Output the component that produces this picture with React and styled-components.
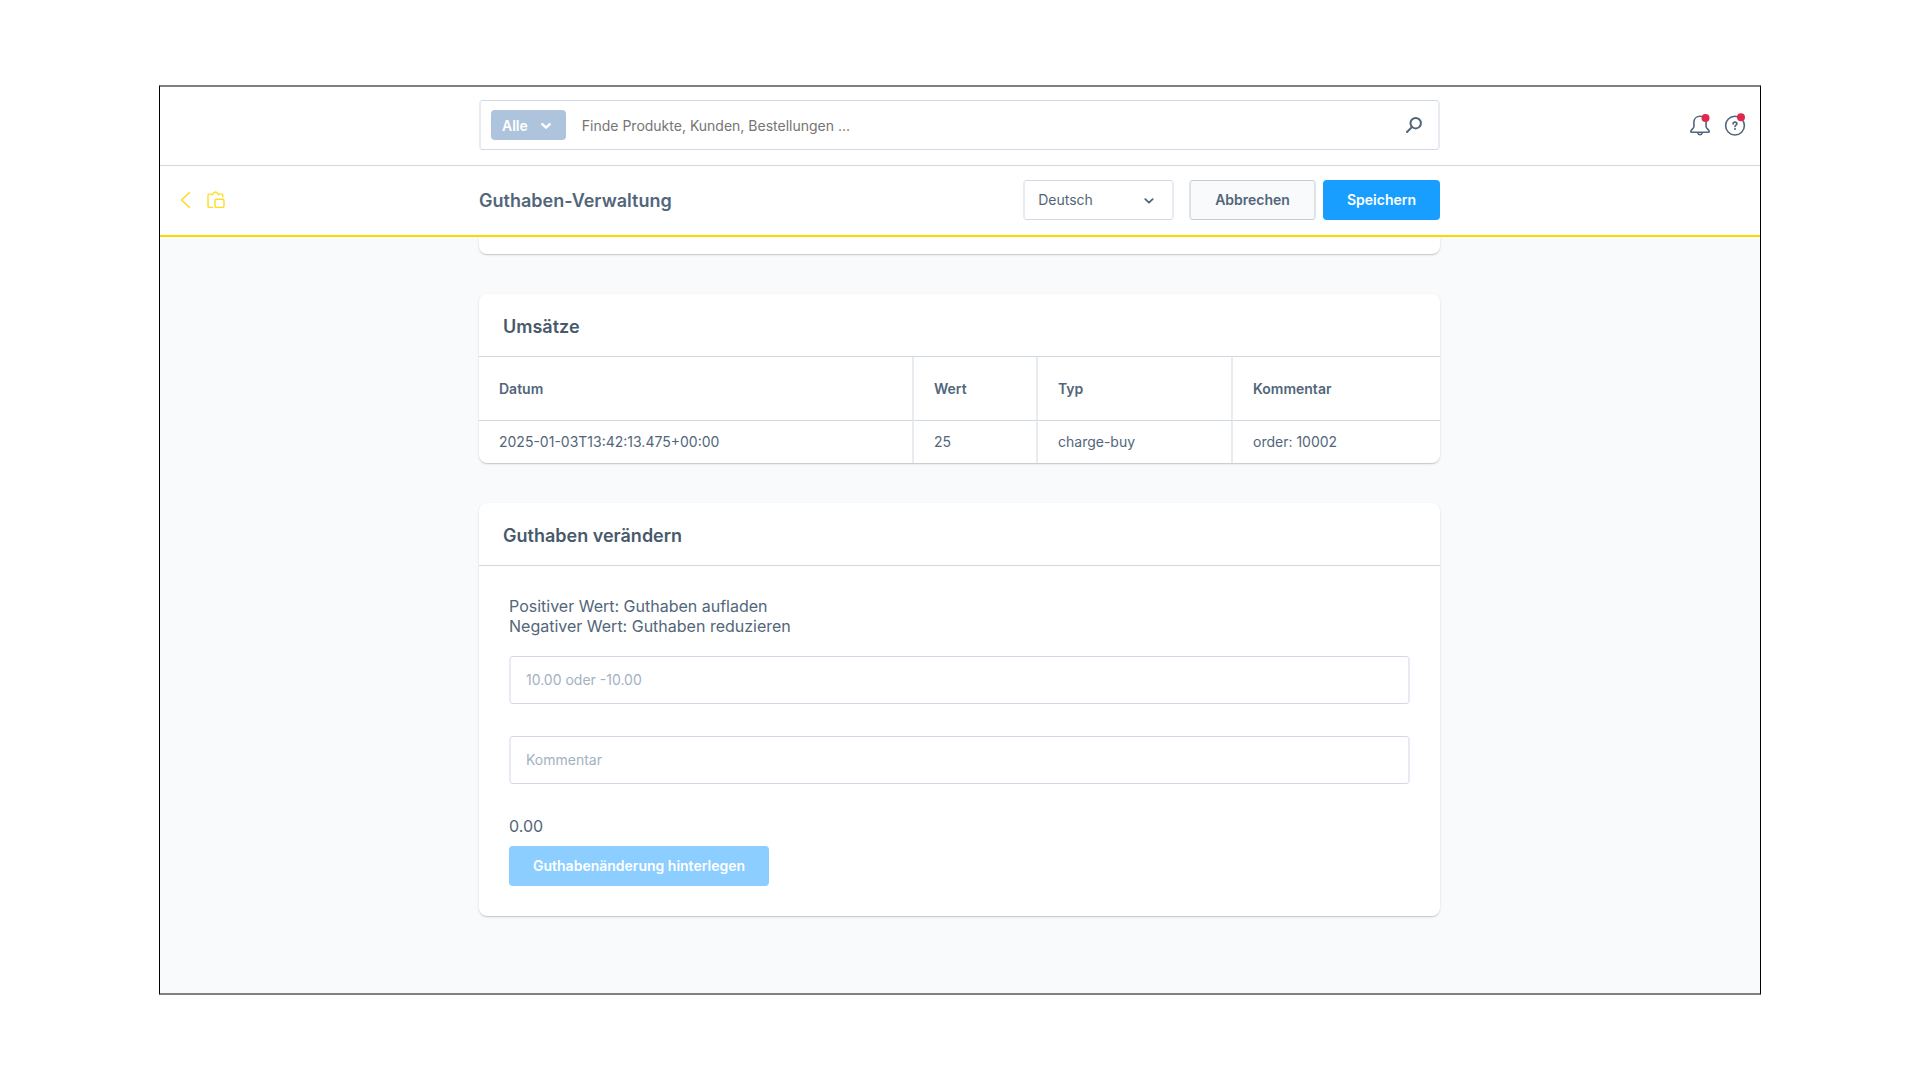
import React from "react";
import styled, { createGlobalStyle } from "styled-components";

const GlobalStyle = createGlobalStyle`
  * {
    box-sizing: border-box;
  }

  body {
    margin: 0;
    background: #fff;
    color: #52667a;
    font-family: Inter, "Liberation Sans", sans-serif;
    font-size: 14px;
    line-height: 20px;
  }

  button, input, select {
    font: inherit;
  }
`;

const Frame = styled.div`
  display: flex;
  flex-direction: column;
  min-height: calc(100vh - 170px);
  margin: 85px 159px;
  border: solid #000;
  border-width: 2px 1px;
  border-top-color: #808080;
  border-bottom-color: #808080;
  background: #f9fafc;
`;

const Bar = styled.header`
  display: grid;
  grid-template-columns: 1fr minmax(0, 961px) 1fr;
  padding-right: 1px;
  background: #fff;
`;

const SearchHeader = styled(Bar)`
  padding-top: 13px;
  padding-bottom: 15px;
  border-bottom: 1px solid #d1d9e0;
`;

const SmartBar = styled(Bar)`
  align-items: center;
  padding-top: 14px;
  padding-bottom: 15px;
  border-bottom: 2px solid #ffd700;
`;

const SearchBox = styled.form`
  display: flex;
  align-items: center;
  grid-column: 2;
  height: 50px;
  padding: 0 16px 0 10px;
  border: solid #d1d9e6;
  border-width: 1px 2px;
  border-left-color: #e8ecf2;
  border-right-color: #e8ecf2;
  border-radius: 4px;
`;

const TypeButton = styled.button`
  display: flex;
  align-items: center;
  gap: 13px;
  height: 30px;
  padding: 1px 15px 0 11px;
  border: 0;
  border-radius: 4px;
  background: #aec4dc;
  color: #fff;
  font-weight: 600;
`;

const SearchInput = styled.input`
  flex: 1;
  min-width: 0;
  margin-left: 16px;
  padding: 2px 0 0;
  border: 0;
  outline: 0;
  background: none;

  &::placeholder {
    color: #757575;
  }
`;

const IconButton = styled.button`
  display: flex;
  padding: 0;
  border: 0;
  background: none;
  color: #52667a;
`;

const HeaderActions = styled.div`
  display: flex;
  align-items: center;
  justify-content: flex-end;
  gap: 13px;
  padding-right: 13px;
`;

const ModuleNav = styled.nav`
  display: flex;
  align-items: center;
  gap: 14px;
  padding-left: 19px;
`;

const BackLink = styled.a`
  display: flex;
  color: #ffd91a;
`;

const SmartBarContent = styled.div`
  display: flex;
  align-items: center;
`;

const PageTitle = styled.h1`
  flex: 1;
  margin: 0;
  padding-top: 2px;
  font-size: 18px;
  font-weight: 600;
  line-height: 24px;
`;

const SelectWrap = styled.div`
  position: relative;
  width: 151px;
  margin-right: 15px;

  svg {
    position: absolute;
    top: 18px;
    right: 20px;
    pointer-events: none;
  }
`;

const Select = styled.select`
  appearance: none;
  width: 100%;
  height: 40px;
  padding: 0 40px 0 13px;
  border: solid #d1d9e6;
  border-width: 1px 2px;
  border-left-color: #e8ecf2;
  border-right-color: #e8ecf2;
  border-radius: 4px;
  background: #fff;
  color: #52667a;
`;

const Button = styled.button`
  height: 40px;
  padding: 0 24px;
  border: 0;
  border-radius: 4px;
  background: #189eff;
  color: #fff;
  font-weight: 600;

  &:disabled {
    background: #8bceff;
  }
`;

const CancelButton = styled(Button)`
  margin-right: 7px;
  border: solid #c2ccd6;
  border-width: 1px 2px;
  border-left-color: #dde3e9;
  border-right-color: #dde3e9;
  background: #f9fafc;
  color: #52667a;
`;

const Content = styled.main`
  display: grid;
  grid-template-columns: minmax(0, 961px);
  justify-content: center;
  gap: 40px;
  padding: 0 1px 77px 0;
`;

const Card = styled.section`
  border-radius: 8px;
  background: #fff;
  box-shadow: 0 1px 1px rgba(0, 0, 0, 0.08), 0 2px 1px -1px rgba(0, 0, 0, 0.06),
    0 1px 3px rgba(0, 0, 0, 0.1);
`;

// end of the card that is scrolled under the smart bar
const CardEnd = styled(Card)`
  height: 17px;
  border-radius: 0 0 8px 8px;
  clip-path: inset(0 -4px -4px -4px);
`;

const CardTitle = styled.h2`
  margin: 0;
  padding: 21px 24px 17px;
  border-bottom: 1px solid #d1d9e0;
  color: #475a6b;
  font-size: 18px;
  font-weight: 600;
  line-height: 24px;
`;

const Table = styled.table`
  width: 100%;
  border-spacing: 0;
  table-layout: fixed;
  text-align: left;

  th,
  td {
    padding: 0 19px 0 20px;
    border-right: 2px solid #e8ecf0;
  }

  th:last-child,
  td:last-child {
    border-right: 0;
  }

  th {
    height: 64px;
    border-bottom: 1px solid #d1d9e0;
    font-weight: 600;
  }

  td {
    height: 42px;
  }
`;

const Form = styled.form`
  padding: 30px;
  font-size: 16px;
`;

const Hint = styled.label`
  display: block;
  margin-bottom: 20px;
`;

const Input = styled.input`
  display: block;
  width: 100%;
  height: 48px;
  margin-bottom: 32px;
  padding: 0 15px 2px;
  border: solid #d1d9e6;
  border-width: 1px 2px;
  border-left-color: #e8ecf2;
  border-right-color: #e8ecf2;
  border-radius: 4px;
  color: #52667a;
  font-size: 14px;

  &::placeholder {
    color: #a3b1c2;
  }
`;

const Amount = styled.p`
  margin: 0 0 10px;
`;

const SubmitButton = styled(Button)`
  font-size: 14px;
`;

const Chevron = ({ width = 1.8 }) => (
  <svg
    width="10"
    height="6"
    viewBox="0 0 10 6"
    fill="none"
    stroke="currentColor"
    strokeWidth={width}
    strokeLinecap="round"
    strokeLinejoin="round"
  >
    <path d="M1.3 1.2L5 4.7l3.7-3.5" />
  </svg>
);

const SearchIcon = () => (
  <svg
    width="16"
    height="16"
    viewBox="0 0 16 16"
    fill="none"
    stroke="currentColor"
    strokeWidth="2"
    strokeLinecap="round"
  >
    <circle cx="9.7" cy="6.2" r="5.2" />
    <path d="M6 10l-5 5" />
  </svg>
);

const BellIcon = () => (
  <svg
    width="22"
    height="24"
    viewBox="1 0 22 24"
    fill="none"
    stroke="currentColor"
    strokeWidth="1.6"
    strokeLinejoin="round"
  >
    <path d="M12 3.3c-3.5 0-6.1 2.5-6.1 6v4.5c0 1.7-3.1 2.9-3.1 4.6 0 .5.3.8.8.8h16.8c.5 0 .8-.3.8-.8 0-1.7-3.1-2.9-3.1-4.6V9.3c0-3.5-2.6-6-6.1-6z" />
    <path d="M9.5 19.5c.5 1.5 1.4 2.2 2.5 2.2s2-.7 2.5-2.2" />
    <circle cx="17.5" cy="5" r="4" fill="#de294c" stroke="none" />
  </svg>
);

const HelpIcon = () => (
  <svg
    width="22"
    height="24"
    viewBox="0 0 22 24"
    fill="none"
    stroke="currentColor"
    strokeWidth="1.6"
    strokeLinecap="round"
  >
    <circle cx="11" cy="12.6" r="9.4" />
    <path d="M9.1 10.9c0-1.1.8-1.800 1.900-1.800s1.900.7 1.900 1.700c0 1.300-1.900 1.400-1.900 2.800" />
    <circle cx="11" cy="16" r="1" fill="currentColor" stroke="none" />
    <circle cx="17" cy="4.2" r="4" fill="#de294c" stroke="none" />
  </svg>
);

const BackIcon = () => (
  <svg
    width="14"
    height="18"
    viewBox="0 0 14 18"
    fill="none"
    stroke="currentColor"
    strokeWidth="1.5"
    strokeLinecap="round"
    strokeLinejoin="round"
  >
    <path d="M10.5 1.5L2.5 9l8 7.5" />
  </svg>
);

const ClipboardIcon = () => (
  <svg
    width="18"
    height="18"
    viewBox="0 0 18 18"
    fill="none"
    stroke="#ffdd22"
    strokeWidth="1.4"
    strokeLinecap="round"
    strokeLinejoin="round"
  >
    <path d="M5.6 16.400H2.400c-.9 0-1.400-.6-1.400-1.500V4.600c0-.9.5-1.500 1.400-1.500H5.400" />
    <path d="M5.400 3.900V3.100c.8 0 1.100-.4 1.300-1C7 1.400 7.700 1 8.500 1s1.500.4 1.800 1.100c.2.600.5 1 1.300 1V3.900" />
    <path d="M11.600 3.100h2.900c.9 0 1.400.6 1.400 1.500v1.100" />
    <rect x="8" y="8.200" width="9" height="8.200" rx="1.500" />
  </svg>
);

const transactions = [
  {
    date: "2025-01-03T13:42:13.475+00:00",
    value: 25,
    type: "charge-buy",
    comment: "order: 10002",
  },
];

const App = () => {
  const [amount, setAmount] = React.useState("");
  const [comment, setComment] = React.useState("");
  const total = Number(amount) || 0;

  return (
    <>
      <GlobalStyle />
      <Frame>
        <SearchHeader>
          <SearchBox role="search" onSubmit={(event) => event.preventDefault()}>
            <TypeButton type="button">
              Alle
              <Chevron width={2.4} />
            </TypeButton>
            <SearchInput
              type="text"
              aria-label="Suche"
              placeholder="Finde Produkte, Kunden, Bestellungen ..."
            />
            <IconButton aria-label="Suchen">
              <SearchIcon />
            </IconButton>
          </SearchBox>
          <HeaderActions>
            <IconButton type="button" aria-label="Benachrichtigungen">
              <BellIcon />
            </IconButton>
            <IconButton type="button" aria-label="Hilfe">
              <HelpIcon />
            </IconButton>
          </HeaderActions>
        </SearchHeader>

        <SmartBar as="div">
          <ModuleNav>
            <BackLink href="#" aria-label="Zurück">
              <BackIcon />
            </BackLink>
            <ClipboardIcon />
          </ModuleNav>
          <SmartBarContent>
            <PageTitle>Guthaben-Verwaltung</PageTitle>
            <SelectWrap>
              <Select aria-label="Sprache">
                <option>Deutsch</option>
              </Select>
              <Chevron />
            </SelectWrap>
            <CancelButton type="button">Abbrechen</CancelButton>
            <Button type="button">Speichern</Button>
          </SmartBarContent>
        </SmartBar>

        <Content>
          <CardEnd as="div" />
          <Card>
            <CardTitle>Umsätze</CardTitle>
            <Table>
              <colgroup>
                <col width="435" />
                <col width="124" />
                <col width="195" />
                <col />
              </colgroup>
              <thead>
                <tr>
                  <th>Datum</th>
                  <th>Wert</th>
                  <th>Typ</th>
                  <th>Kommentar</th>
                </tr>
              </thead>
              <tbody>
                {transactions.map((row) => (
                  <tr key={row.date}>
                    <td>{row.date}</td>
                    <td>{row.value}</td>
                    <td>{row.type}</td>
                    <td>{row.comment}</td>
                  </tr>
                ))}
              </tbody>
            </Table>
          </Card>
          <Card>
            <CardTitle>Guthaben verändern</CardTitle>
            <Form onSubmit={(event) => event.preventDefault()}>
              <Hint htmlFor="amount">
                Positiver Wert: Guthaben aufladen
                <br />
                Negativer Wert: Guthaben reduzieren
              </Hint>
              <Input
                id="amount"
                type="text"
                placeholder="10.00 oder -10.00"
                value={amount}
                onChange={(event) => setAmount(event.target.value)}
              />
              <Input
                type="text"
                aria-label="Kommentar"
                placeholder="Kommentar"
                value={comment}
                onChange={(event) => setComment(event.target.value)}
              />
              <Amount>{total.toFixed(2)}</Amount>
              <SubmitButton disabled={total === 0}>
                Guthabenänderung hinterlegen
              </SubmitButton>
            </Form>
          </Card>
        </Content>
      </Frame>
    </>
  );
};

export default App;
